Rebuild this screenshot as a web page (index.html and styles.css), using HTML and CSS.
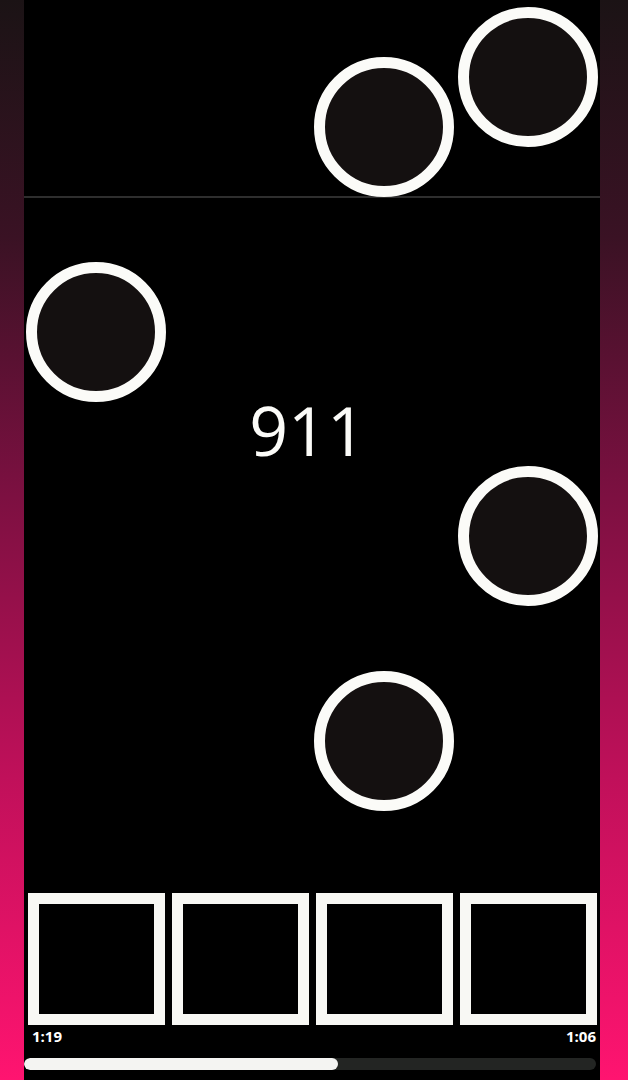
FILE: index.html
```html
<!DOCTYPE html>
<html>
<head>
<meta charset="utf-8">
<link rel="stylesheet" href="styles.css">
</head>
<body>
<div class="frame">
  <div class="side side-left"></div>
  <main class="game">
    <section class="field">
      <div class="hit-zone"></div>
      <div class="note" style="left:290px;top:57px"></div>
      <div class="note" style="left:434px;top:7px"></div>
      <div class="note" style="left:2px;top:262px"></div>
      <div class="note" style="left:434px;top:466px"></div>
      <div class="note" style="left:290px;top:671px"></div>
      <div class="score">911</div>
    </section>
    <section class="pads">
      <div class="pad"></div>
      <div class="pad"></div>
      <div class="pad"></div>
      <div class="pad"></div>
    </section>
    <div class="times">
      <span>1:19</span>
      <span>1:06</span>
    </div>
    <div class="progress"><div class="progress-fill" style="width:314px"></div></div>
  </main>
  <div class="side side-right"></div>
</div>
</body>
</html>
```
FILE: styles.css
```css
html, body {
  margin: 0;
  padding: 0;
  background: #000;
}
.frame {
  display: flex;
  width: 628px;
  height: 1080px;
  overflow: hidden;
}
.side {
  background: linear-gradient(to bottom, #1b1315 0%, #3a1224 22%, #7a1040 45%, #c0105a 72%, #ff1470 100%);
}
.side-left { width: 24px; }
.side-right { width: 28px; }
.game {
  width: 576px;
  background: #000;
  display: flex;
  flex-direction: column;
}
.field {
  position: relative;
  height: 893px;
}
.hit-zone {
  height: 196px;
  border-bottom: 2px solid #2e2e2e;
}
.note {
  position: absolute;
  width: 140px;
  height: 140px;
  box-sizing: border-box;
  border-radius: 50%;
  border: 11px solid #fbfbf8;
  background: #141010;
}
.score {
  position: absolute;
  left: 0;
  right: 0;
  top: 385px;
  padding-right: 9px;
  text-align: center;
  font-family: "Open Sans", sans-serif;
  font-weight: 400;
  font-size: 68px;
  letter-spacing: 0;
  line-height: 90px;
  color: #fbfbf8;
}
.pads {
  display: flex;
  gap: 7px;
  padding-left: 4px;
}
.pad {
  width: 137px;
  height: 132px;
  box-sizing: border-box;
  border: 11px solid #f8f8f4;
  background: #000;
}
.times {
  display: flex;
  justify-content: space-between;
  padding: 2px 4px 0 8px;
  height: 33px;
  box-sizing: border-box;
  font-family: "Open Sans", sans-serif;
  font-weight: 700;
  font-size: 15px;
  line-height: 18px;
  color: #fff;
}
.progress {
  height: 12px;
  width: 572px;
  border-radius: 6px;
  background: #232523;
  overflow: hidden;
}
.progress-fill {
  height: 100%;
  border-radius: 6px;
  background: #f4f4f2;
}
```
